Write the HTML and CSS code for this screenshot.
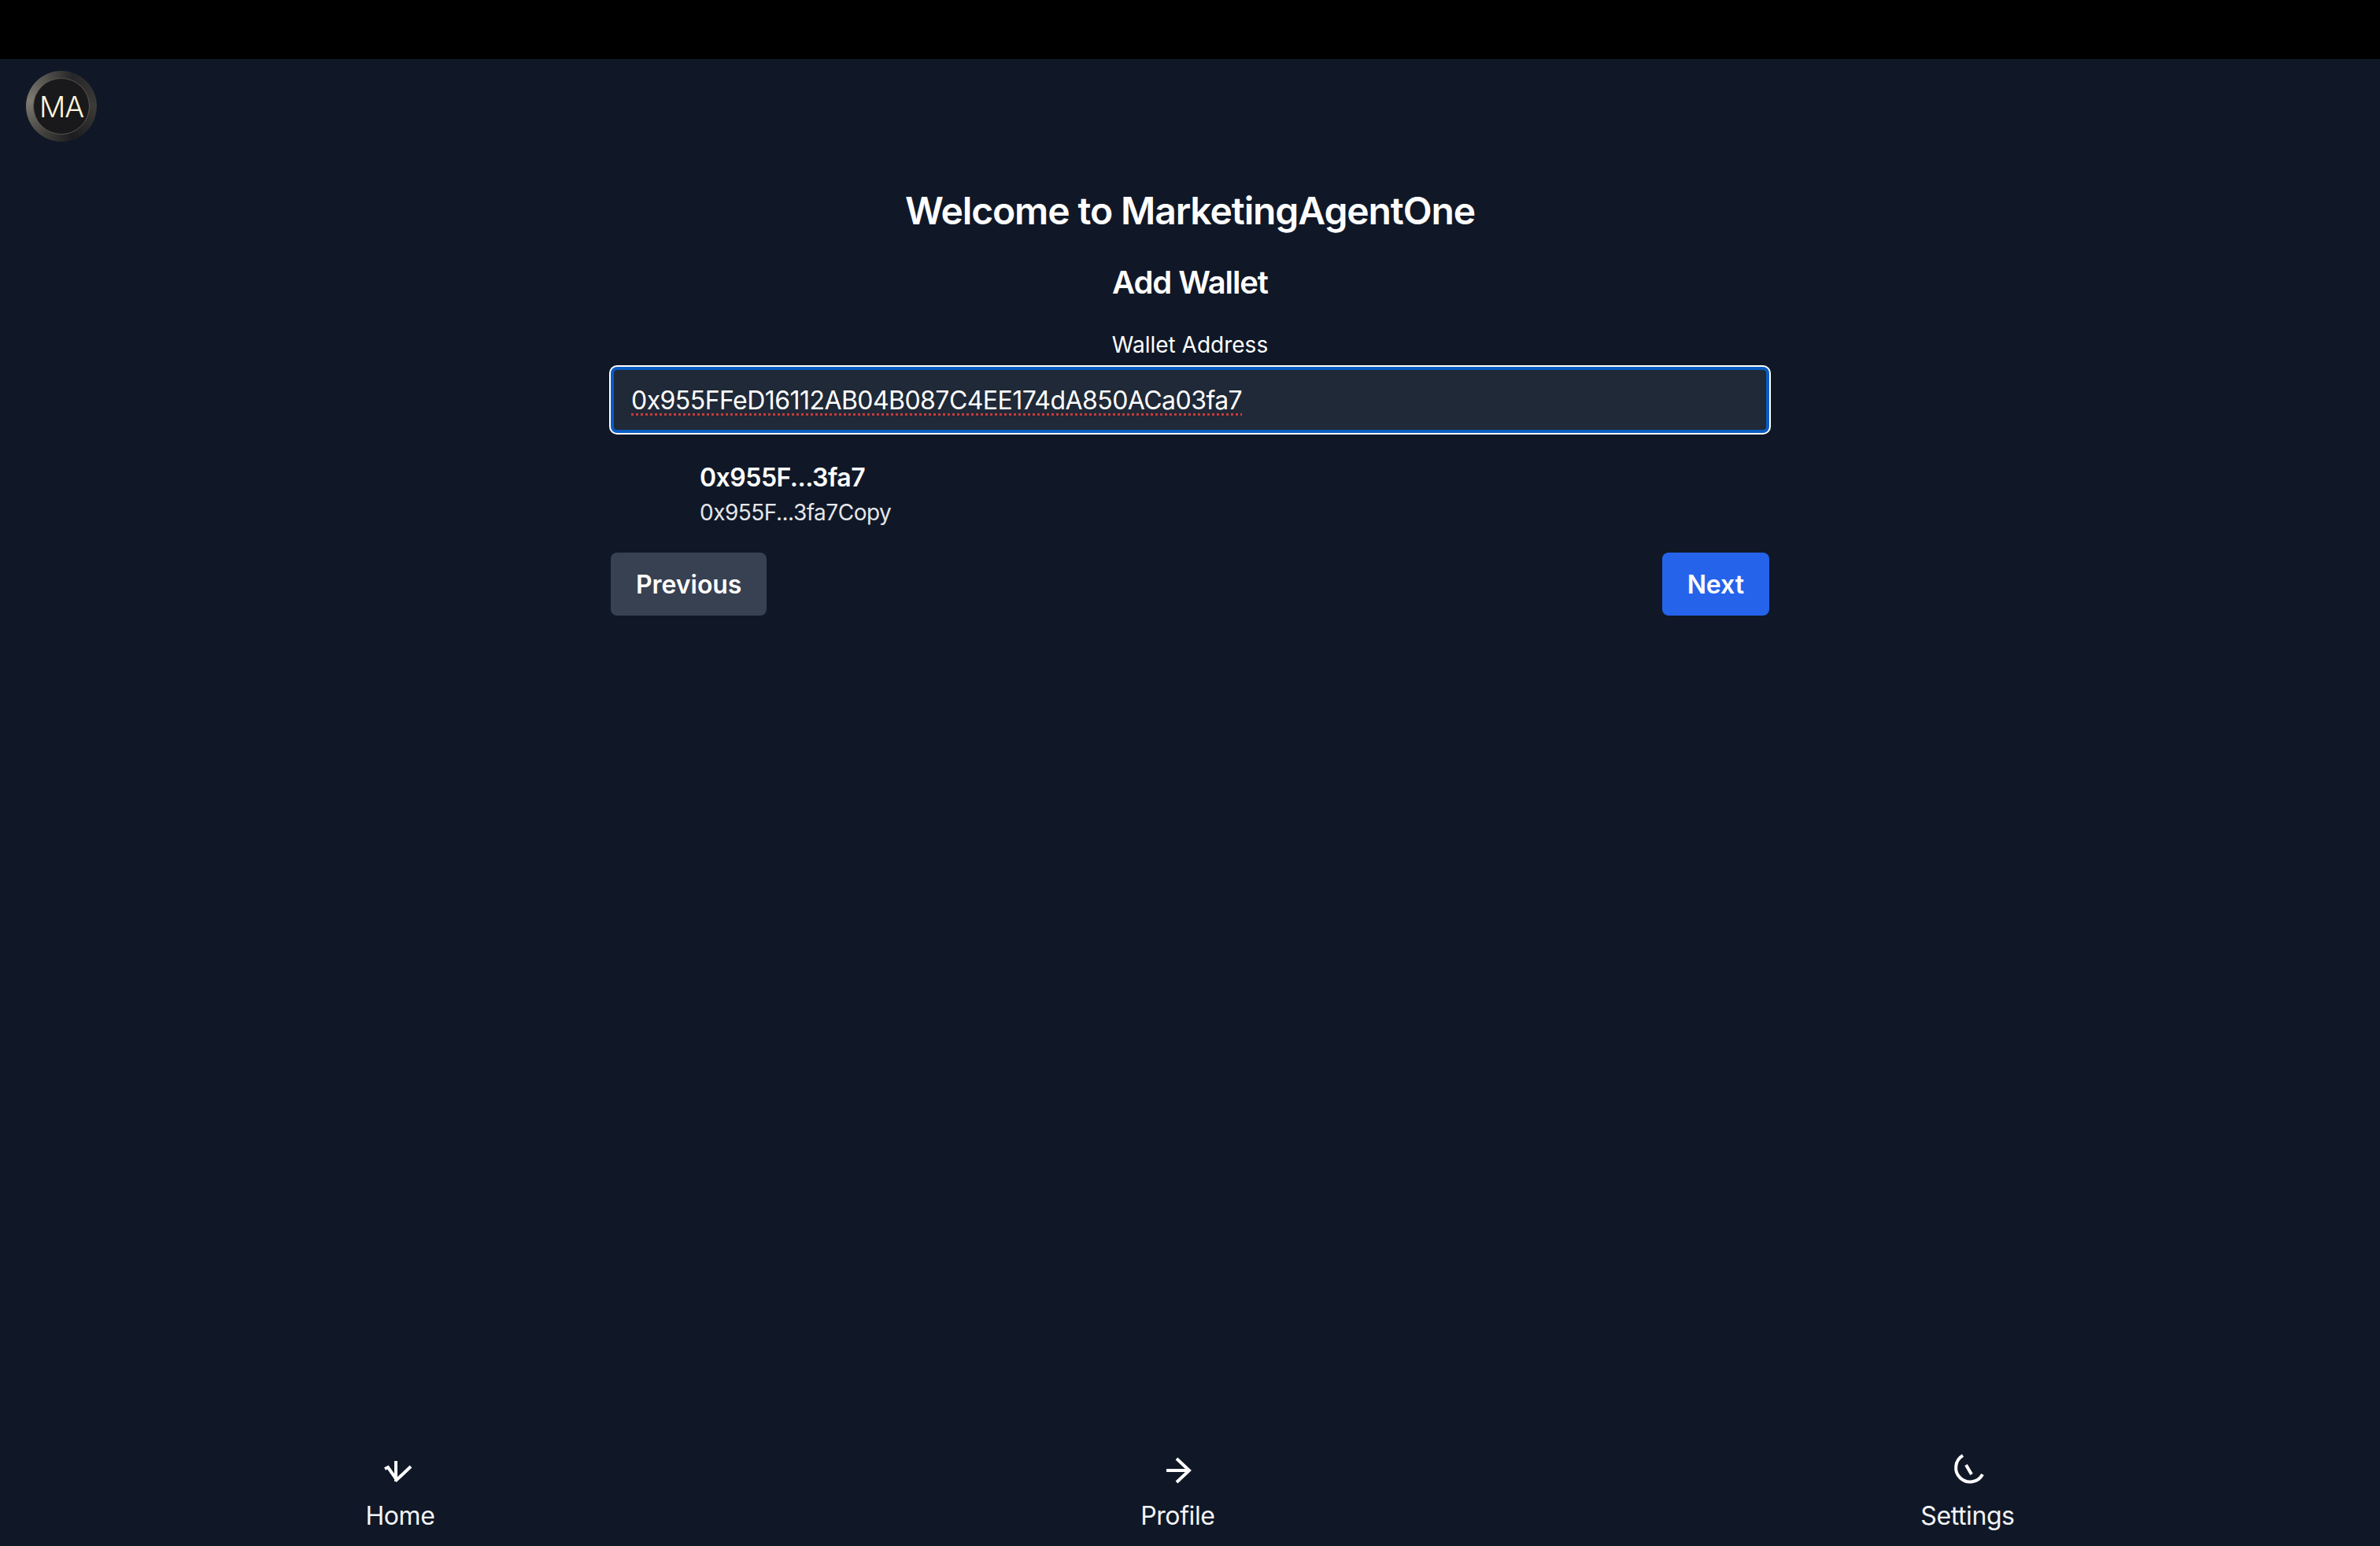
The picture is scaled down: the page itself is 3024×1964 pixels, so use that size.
FILE: index.html
```html
<!DOCTYPE html>
<html lang="en">
<head>
    <meta charset="UTF-8">
    <meta name="viewport" content="width=device-width, initial-scale=1.0">
    <title>MarketingAgentOne</title>
    <link rel="stylesheet" href="styles.css">
</head>
<body>

    <div class="top-bar"></div>

    <header class="header">
        <div class="avatar">
            <div class="avatar-inner">MA</div>
        </div>
    </header>

    <main class="container">
        <h1>Welcome to MarketingAgentOne</h1>
        <h2>Add Wallet</h2>

        <label class="field-label" for="wallet">Wallet Address</label>
        <input class="wallet-input" type="text" id="wallet" spellcheck="false" value="0x955FFeD16112AB04B087C4EE174dA850ACa03fa7">

        <div class="wallet-item">
            <div class="wallet-name">0x955F...3fa7</div>
            <div class="wallet-sub">0x955F...3fa7Copy</div>
        </div>

        <div class="actions">
            <button class="btn btn-secondary">Previous</button>
            <button class="btn btn-primary">Next</button>
        </div>
    </main>

    <nav class="bottom-nav">
        <a class="nav-item">
            <svg class="nav-icon" viewBox="0 0 48 48">
                <path d="M19 12V38"/>
                <path d="M5 22L9 20L20 36L38 19"/>
            </svg>
            <span>Home</span>
        </a>
        <a class="nav-item">
            <svg class="nav-icon" viewBox="0 0 48 48">
                <path d="M10 24H39"/>
                <path d="M23 9L39 24L23 39"/>
            </svg>
            <span>Profile</span>
        </a>
        <a class="nav-item">
            <svg class="nav-icon" viewBox="0 0 48 48">
                <path d="M18 5A18 18 0 1 0 43 29"/>
                <path d="M22 17L29 29"/>
            </svg>
            <span>Settings</span>
        </a>
    </nav>

</body>
</html>
```

FILE: styles.css
```css
* {
    box-sizing: border-box;
}
html, body {
    height: 100%;
}
body {
    font-family: Inter, "Liberation Sans", sans-serif;
    background-color: #101827;
    color: #ffffff;
    margin: 0;
    display: flex;
    flex-direction: column;
    min-height: 1964px;
}
.top-bar {
    height: 75px;
    background-color: #000000;
}
.header {
    padding: 15px 33px 0;
}
.avatar {
    width: 90px;
    height: 90px;
    padding: 9px;
    border-radius: 50%;
    background: conic-gradient(from 20deg, #26262a, #3c3b38 70deg, #1c1c20 140deg, #3f3e3a 190deg, #7d7b72 260deg, #55534d 310deg, #26262a);
}
.avatar-inner {
    width: 72px;
    height: 72px;
    border-radius: 50%;
    border: 1px solid #57554c;
    background-color: #19191b;
    color: #fdf7de;
    font-size: 37px;
    font-weight: 300;
    letter-spacing: -1px;
    display: flex;
    align-items: center;
    justify-content: center;
}
.container {
    width: 1472px;
    margin: 0 auto;
    flex: 1;
}
h1 {
    font-size: 48px;
    line-height: 64px;
    font-weight: 600;
    letter-spacing: -1.1px;
    text-align: center;
    margin: 56px 0 0;
}
h2 {
    font-size: 40px;
    line-height: 56px;
    font-weight: 600;
    letter-spacing: -1.1px;
    text-align: center;
    margin: 31px 0 0;
}
.field-label {
    display: block;
    font-size: 28px;
    line-height: 40px;
    text-align: center;
    margin-top: 31px;
    margin-bottom: 6px;
}
.wallet-input {
    display: block;
    width: 1472px;
    height: 84px;
    margin: 8px 0 2px;
    padding: 0 22px;
    font-family: inherit;
    font-size: 32px;
    letter-spacing: -0.55px;
    color: #ffffff;
    background-color: #1f2937;
    border: 4px solid #0a5cc2;
    border-radius: 8px;
    box-shadow: 0 0 0 2px #ffffff;
    outline: none;
    text-decoration: underline dotted #c93a3a 3px;
    text-underline-offset: 5px;
}
.wallet-item {
    padding-left: 113px;
    margin-top: 35px;
}
.wallet-name {
    font-size: 32px;
    line-height: 44px;
    font-weight: 600;
    letter-spacing: -0.5px;
}
.wallet-sub {
    font-size: 28px;
    line-height: 40px;
    margin-top: 2px;
    letter-spacing: -0.5px;
    color: #e5e7eb;
}
.actions {
    display: flex;
    justify-content: space-between;
    margin-top: 31px;
}
.btn {
    height: 80px;
    padding: 0 32px;
    border: none;
    border-radius: 8px;
    color: #ffffff;
    font-family: inherit;
    font-size: 32px;
    font-weight: 600;
    letter-spacing: -0.05px;
    cursor: pointer;
}
.btn-secondary {
    background-color: #374151;
}
.btn-primary {
    background-color: #2563eb;
}
.bottom-nav {
    display: flex;
    justify-content: space-around;
    padding: 0 16px;
    height: 120px;
}
.nav-item {
    display: flex;
    flex-direction: column;
    align-items: center;
    font-size: 32px;
    line-height: 48px;
    letter-spacing: -0.4px;
    color: #f3f4f6;
}
.nav-icon {
    width: 48px;
    height: 48px;
    margin-bottom: 10px;
    fill: none;
    stroke: #ffffff;
    stroke-width: 4;
}
```
